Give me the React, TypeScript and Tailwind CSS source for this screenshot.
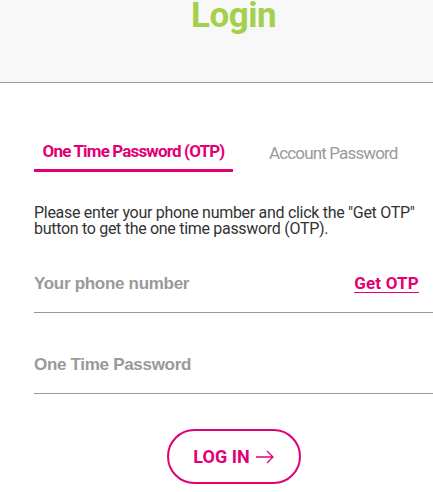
import { useState } from "react";

export default function App() {
  const [tab, setTab] = useState<"otp" | "account">("otp");
  const [phone, setPhone] = useState("");
  const [otp, setOtp] = useState("");

  return (
    <div className="min-h-screen bg-white font-['Roboto',sans-serif]">
      <header className="h-[83px] bg-[#f8f8f8] border-b border-[#999] flex justify-center pl-[34px]">
        <h1 className="text-[35px] font-bold leading-none text-[#a5d04b] -mt-[2px] tracking-[-0.5px]">
          Login
        </h1>
      </header>

      <main className="pl-[34px] pt-[59px]">
        <div className="flex items-end">
          <button
            onClick={() => setTab("otp")}
            className={
              tab === "otp"
                ? "w-[199px] h-[30px] border-b-[3px] border-[#e20074] text-[#e20074] font-bold text-[17px] tracking-[-0.85px] leading-none pb-[8px] flex items-center justify-center"
                : "w-[199px] h-[30px] text-[#999] text-[17px] tracking-[-0.85px] leading-none pb-[8px] flex items-center justify-center"
            }
          >
            One Time Password (OTP)
          </button>
          <button
            onClick={() => setTab("account")}
            className={
              tab === "account"
                ? "ml-[36px] h-[30px] border-b-[3px] border-[#e20074] text-[#e20074] font-bold text-[17px] tracking-[-0.85px] leading-none pb-[8px]"
                : "ml-[36px] h-[30px] text-[#999] text-[17px] tracking-[-0.85px] leading-none pb-[8px]"
            }
          >
            Account Password
          </button>
        </div>

        <p className="mt-[33px] pr-[14px] text-[16px] leading-[16px] tracking-[-0.3px] text-[#333]">
          Please enter your phone number and click the "Get OTP" button to get the one time password (OTP).
        </p>

        <div className="mt-[28px] h-[48px] border-b border-[#999] flex items-center pb-[10px] pr-[14px]">
          <input
            value={phone}
            onChange={(e) => setPhone(e.target.value)}
            placeholder="Your phone number"
            className="flex-1 min-w-0 outline-none bg-transparent text-[17px] font-bold tracking-[-0.3px] font-['Liberation_Sans',sans-serif] text-[#333] placeholder:text-[#999]"
          />
          <button className="text-[#e20074] font-bold text-[17px] underline underline-offset-[3px] tracking-[0.2px]">
            Get OTP
          </button>
        </div>

        <div className="mt-[33px] h-[48px] border-b border-[#999] flex items-center pb-[10px] pr-[14px]">
          <input
            value={otp}
            onChange={(e) => setOtp(e.target.value)}
            placeholder="One Time Password"
            className="flex-1 min-w-0 outline-none bg-transparent text-[17px] font-bold tracking-[-0.3px] font-['Liberation_Sans',sans-serif] text-[#333] placeholder:text-[#999]"
          />
        </div>

        <div className="flex justify-center mt-[35px]">
          <button className="w-[134px] h-[55px] rounded-full border-2 border-[#e20074] text-[#e20074] font-bold text-[18px] flex items-center justify-center gap-[6px]">
            LOG IN
            <svg width="18" height="14" viewBox="0 0 18 14" fill="none" stroke="#e20074" strokeWidth="1.3">
              <path d="M0 7h17M11 1l6 6-6 6" />
            </svg>
          </button>
        </div>
      </main>
    </div>
  );
}
